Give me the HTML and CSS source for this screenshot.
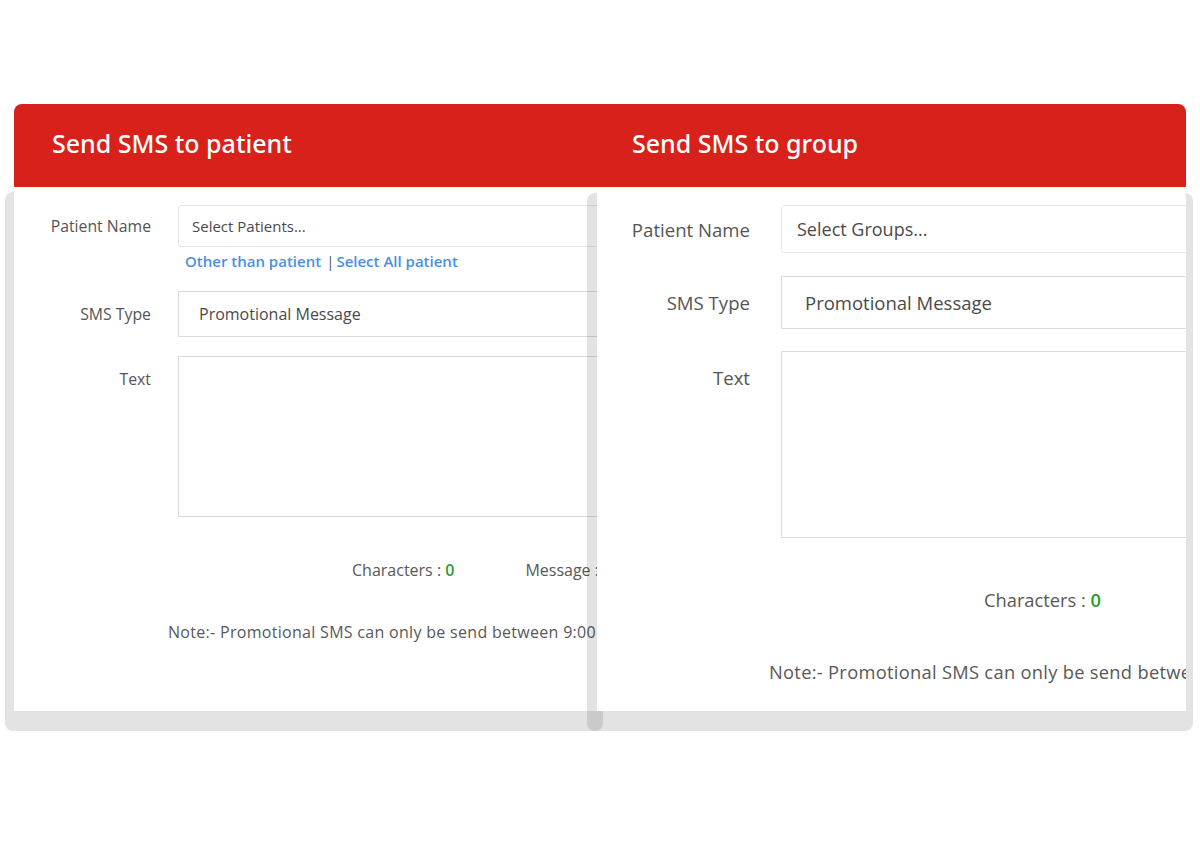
FILE: index.html
```html
<!DOCTYPE html>
<html lang="en">
<head>
    <meta charset="UTF-8">
    <meta name="viewport" content="width=device-width, initial-scale=1.0">
    <title>Send SMS</title>
    <link rel="stylesheet" href="styles.css">
</head>
<body>
<div class="banner">
    <h2 class="banner-title">Send SMS to patient</h2>
    <h2 class="banner-title">Send SMS to group</h2>
</div>

<div class="shots">
    <!-- patient screen -->
    <div class="shot shot-left">
        <div class="sms-form">
            <div class="form-row">
                <div class="form-label">Patient Name</div>
                <div class="field field-select">Select Patients...</div>
            </div>
            <div class="form-links">
                <a href="#" class="link">Other than patient</a><span class="link-sep">|</span><a href="#" class="link">Select All patient</a>
            </div>
            <div class="form-row row-type">
                <div class="form-label">SMS Type</div>
                <div class="field field-type">Promotional Message</div>
            </div>
            <div class="form-row row-text">
                <div class="form-label label-top">Text</div>
                <div class="field field-area"></div>
            </div>
            <div class="counter-row">
                <span class="counter">Characters : <b class="count">0</b></span>
                <span class="counter">Message : <b class="count">0</b></span>
            </div>
            <div class="note">Note:- Promotional SMS can only be send between 9:00 AM to 9:00 PM</div>
        </div>
    </div>

    <!-- group screen -->
    <div class="shot shot-right">
        <div class="sms-form sms-form-large">
            <div class="form-row">
                <div class="form-label">Patient Name</div>
                <div class="field field-select">Select Groups...</div>
            </div>
            <div class="form-row row-type">
                <div class="form-label">SMS Type</div>
                <div class="field field-type">Promotional Message</div>
            </div>
            <div class="form-row row-text">
                <div class="form-label label-top">Text</div>
                <div class="field field-area"></div>
            </div>
            <div class="counter-row">
                <span class="counter">Characters : <b class="count">0</b></span>
                <span class="counter">Message : <b class="count">0</b></span>
            </div>
            <div class="note">Note:- Promotional SMS can only be send between 9:00 AM to 9:00 PM</div>
        </div>
    </div>
</div>
</body>
</html>
```

FILE: styles.css
```css
body {
    margin: 0;
    padding-top: 104px;
    background-color: #fff;
    font-family: "Open Sans", Arial, sans-serif;
    color: #585858;
}

.banner {
    margin: 0 14px;
    height: 83px;
    padding-left: 38px;
    box-sizing: border-box;
    background-color: #d8211a;
    border-radius: 8px 8px 0 0;
    display: grid;
    grid-template-columns: 580px 1fr;
    align-items: center;
}

.banner-title {
    margin: 0;
    color: #fff;
    font-family: "Noto Sans", sans-serif;
    font-size: 25px;
    font-weight: 500;
    padding-bottom: 5px;
}

.shots {
    display: flex;
    align-items: flex-start;
    margin: 5px 0 0 5px;
}

.shot {
    flex-shrink: 0;
    box-sizing: border-box;
    border: 0 solid rgba(0, 0, 0, 0.11);
    border-left-width: 9px;
    border-bottom-width: 20px;
    border-radius: 8px;
    background-color: #fff;
    background-clip: padding-box;
    overflow: hidden;
}

.shot-left {
    width: 598px;
    height: 539px;
}

.shot-right {
    width: 606px;
    height: 538px;
    margin-top: 1px;
    margin-left: -16px;
    border-left-width: 10px;
    border-right-width: 7px;
}

/* form */
.sms-form {
    padding-top: 13px;
    white-space: nowrap;
}

.form-row {
    display: flex;
    align-items: center;
}

.form-label {
    width: 137px;
    margin-right: 27px;
    flex-shrink: 0;
    text-align: right;
    font-size: 15.8px;
    font-weight: 500;
    color: #555;
}

.label-top {
    align-self: flex-start;
    padding-top: 12px;
}

.field {
    flex-shrink: 0;
    width: 620px;
    box-sizing: border-box;
    border: 1px solid #dcdcdc;
    background-color: #fff;
    display: flex;
    align-items: center;
    font-size: 15.5px;
    color: #4a4a4a;
}

.field-select {
    height: 42px;
    padding-left: 13px;
    border-radius: 3px;
    border-color: #e6e6e6;
    font-size: 15px;
}

.field-type {
    height: 46px;
    padding-left: 20px;
    font-size: 16px;
}

.field-area {
    height: 161px;
}

.row-type {
    margin-top: 20px;
}

.row-text {
    margin-top: 19px;
}

.form-links {
    margin: 4px 0 0 171px;
    height: 20px;
    line-height: 20px;
    font-size: 15px;
    font-weight: 600;
}

.link {
    color: #4a8fe3;
    text-decoration: none;
}

.link-sep {
    margin: 0 2px 0 5px;
    color: #555;
    font-weight: 400;
}

.counter-row {
    margin: 43px 0 0 338px;
    display: flex;
    gap: 71px;
    line-height: 20px;
    font-size: 16px;
}

.count {
    color: #2c9b2c;
    font-weight: 600;
}

.note {
    margin: 42px 0 0 154px;
    line-height: 20px;
    font-size: 16px;
    letter-spacing: 0.3px;
}

/* the group screen is shot a bit larger */
.sms-form-large {
    padding-top: 12px;
}

.sms-form-large .form-label {
    width: 153px;
    margin-right: 31px;
    font-size: 18.6px;
}

.sms-form-large .label-top {
    padding-top: 14px;
}

.sms-form-large .field {
    font-size: 18px;
}

.sms-form-large .field-select {
    height: 48px;
    padding-left: 15px;
}

.sms-form-large .field-type {
    height: 53px;
    padding-left: 23px;
    font-size: 18.5px;
}

.sms-form-large .field-area {
    height: 187px;
}

.sms-form-large .row-type {
    margin-top: 23px;
}

.sms-form-large .row-text {
    margin-top: 22px;
}

.sms-form-large .counter-row {
    margin: 50px 0 0 387px;
    gap: 100px;
    line-height: 24px;
    font-size: 18.3px;
}

.sms-form-large .note {
    margin: 48px 0 0 172px;
    line-height: 24px;
    font-size: 18.3px;
    letter-spacing: 0.3px;
}
```
